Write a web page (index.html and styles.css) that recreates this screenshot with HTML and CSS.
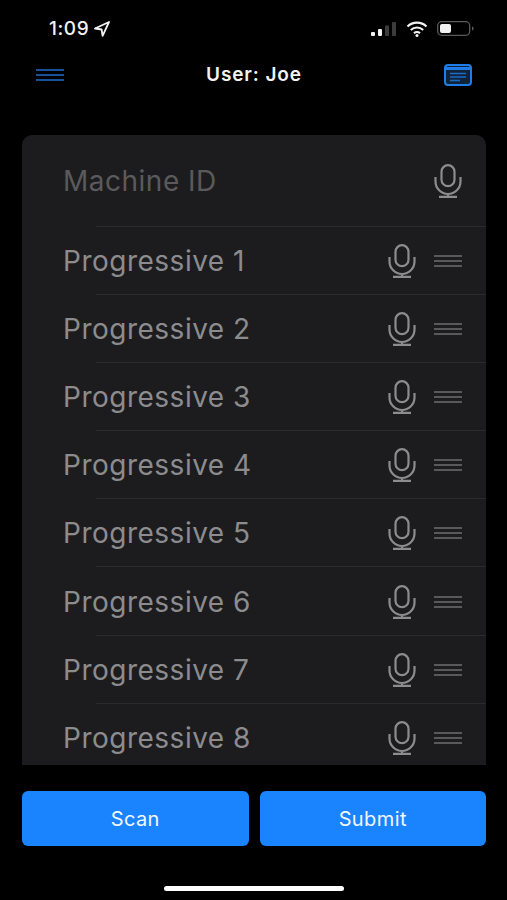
FILE: index.html
```html
<!DOCTYPE html>
<html lang="en">
<head>
    <meta charset="UTF-8">
    <meta name="viewport" content="width=device-width, initial-scale=1.0">
    <title>User: Joe</title>
    <link rel="stylesheet" href="styles.css">
</head>
<body>
    <svg class="sprites" width="0" height="0">
        <symbol id="mic" viewBox="0 0 28 34">
            <rect x="7.5" y="1.2" width="13" height="21" rx="6.5" fill="none" stroke="currentColor" stroke-width="2.2"/>
            <path d="M1.5 13v4.5a12.5 12.5 0 0 0 25 0V13M14 30v3M5 32.8h18" fill="none" stroke="currentColor" stroke-width="2.2"/>
        </symbol>
        <symbol id="handle" viewBox="0 0 28 12">
            <path d="M0 1h28M0 6h28M0 11h28" fill="none" stroke="currentColor" stroke-width="1.3"/>
        </symbol>
    </svg>

    <div class="status-bar">
        <div class="status-left">
            <span class="time">1:09</span>
            <svg class="location" viewBox="0 0 16 16"><path d="M15 1 1 7.5l6.6 1 1 6.4z" fill="none" stroke="currentColor" stroke-width="1.8" stroke-linejoin="round"/></svg>
        </div>
        <div class="status-right">
            <svg class="signal" viewBox="0 0 26 14">
                <rect x="0" y="10" width="4" height="4" rx="1" fill="#f2f2f2"/>
                <rect x="7" y="7" width="4" height="7" rx="1" fill="#f2f2f2"/>
                <rect x="14" y="3.5" width="4" height="10.5" rx="1" fill="#3c3c3c"/>
                <rect x="21" y="0" width="4" height="14" rx="1" fill="#3c3c3c"/>
            </svg>
            <svg class="wifi" viewBox="0 0 22 16">
                <path d="M1.5 5.5a13.5 13.5 0 0 1 19 0M4.8 9a9 9 0 0 1 12.4 0M8 12.2a4.4 4.4 0 0 1 6 0" fill="none" stroke="#f2f2f2" stroke-width="2.1"/>
                <circle cx="11" cy="14.4" r="1.5" fill="#f2f2f2"/>
            </svg>
            <svg class="battery" viewBox="0 0 37 15">
                <rect x="0.7" y="0.7" width="32" height="13.6" rx="4" fill="none" stroke="#5a5a5a" stroke-width="1.3"/>
                <rect x="3" y="3" width="11" height="9" rx="2" fill="#f2f2f2"/>
                <path d="M35 5.5c1 .4 1.6 1.1 1.6 2s-.6 1.6-1.6 2z" fill="#5a5a5a"/>
            </svg>
        </div>
    </div>

    <header class="nav">
        <svg class="menu-icon" viewBox="0 0 28 12"><path d="M0 1h28M0 6h28M0 11h28" fill="none" stroke="currentColor" stroke-width="1.6"/></svg>
        <div class="nav-title">User: Joe</div>
        <svg class="notes-icon" viewBox="0 0 28 22">
            <rect x="1" y="1" width="26" height="20" rx="3" fill="#10233c" stroke="currentColor" stroke-width="2"/>
            <path d="M1 4.5h26" stroke="currentColor" stroke-width="3"/>
            <path d="M6 9.5h16M6 13h16M6 16.5h10" stroke="currentColor" stroke-width="1.3" opacity="0.8"/>
        </svg>
    </header>

    <main class="card">
        <div class="row row-first">
            <span class="row-label placeholder">Machine ID</span>
            <svg class="mic"><use href="#mic"/></svg>
        </div>
        <div class="row"><span class="row-label">Progressive 1</span><svg class="mic"><use href="#mic"/></svg><svg class="handle"><use href="#handle"/></svg></div>
        <div class="row"><span class="row-label">Progressive 2</span><svg class="mic"><use href="#mic"/></svg><svg class="handle"><use href="#handle"/></svg></div>
        <div class="row"><span class="row-label">Progressive 3</span><svg class="mic"><use href="#mic"/></svg><svg class="handle"><use href="#handle"/></svg></div>
        <div class="row"><span class="row-label">Progressive 4</span><svg class="mic"><use href="#mic"/></svg><svg class="handle"><use href="#handle"/></svg></div>
        <div class="row"><span class="row-label">Progressive 5</span><svg class="mic"><use href="#mic"/></svg><svg class="handle"><use href="#handle"/></svg></div>
        <div class="row"><span class="row-label">Progressive 6</span><svg class="mic"><use href="#mic"/></svg><svg class="handle"><use href="#handle"/></svg></div>
        <div class="row"><span class="row-label">Progressive 7</span><svg class="mic"><use href="#mic"/></svg><svg class="handle"><use href="#handle"/></svg></div>
        <div class="row"><span class="row-label">Progressive 8</span><svg class="mic"><use href="#mic"/></svg><svg class="handle"><use href="#handle"/></svg></div>
    </main>

    <div class="actions">
        <button class="action-button">Scan</button>
        <button class="action-button">Submit</button>
    </div>

    <div class="home-bar"></div>
</body>
</html>
```

FILE: styles.css
```css
* {
    box-sizing: border-box;
}
html, body {
    margin: 0;
    height: 100%;
    overflow: hidden;
}
body {
    width: 507px;
    height: 900px;
    display: flex;
    flex-direction: column;
    background-color: #000;
    color: #f2f2f2;
    font-family: Inter, "Liberation Sans", sans-serif;
}
.sprites {
    position: absolute;
}
.status-bar {
    height: 57px;
    padding: 0 33px 0 49px;
    display: flex;
    justify-content: space-between;
    align-items: center;
}
.status-left {
    display: flex;
    align-items: center;
    gap: 5px;
}
.time {
    font-size: 19px;
    font-weight: 500;
    letter-spacing: 0.6px;
}
.location {
    width: 16px;
    height: 16px;
}
.status-right {
    display: flex;
    align-items: center;
    gap: 9px;
}
.signal {
    width: 26px;
    height: 14px;
}
.wifi {
    width: 22px;
    height: 16px;
}
.battery {
    width: 37px;
    height: 15px;
}
.nav {
    height: 36px;
    padding: 0 35px 0 36px;
    display: flex;
    justify-content: space-between;
    align-items: center;
}
.menu-icon {
    width: 28px;
    height: 12px;
    color: #1f6ccb;
}
.nav-title {
    margin-bottom: 2px;
    font-size: 19px;
    font-weight: 600;
    letter-spacing: 0.9px;
}
.notes-icon {
    width: 28px;
    height: 22px;
    color: #1f7de8;
}
.card {
    margin: 42px 21px 0 22px;
    height: 630px;
    flex-shrink: 0;
    overflow: hidden;
    background-color: #1c1c1e;
    border-radius: 10px 10px 0 0;
}
.row {
    position: relative;
    height: 68.1px;
    padding: 0 24px 0 41px;
    display: flex;
    align-items: center;
    gap: 18px;
    color: #8c8c8e;
}
.row::after {
    content: "";
    position: absolute;
    left: 74px;
    right: 0;
    bottom: 0;
    height: 1px;
    background-color: #2b2b2d;
}
.row-first {
    height: 92px;
}
.row-label {
    flex: 1;
    font-size: 28px;
    letter-spacing: 0.5px;
}
.placeholder {
    color: #5a5a5c;
}
.mic {
    width: 28px;
    height: 34px;
}
.handle {
    width: 28px;
    height: 12px;
    color: #6e6e70;
}
.actions {
    margin: 26px 21px 0 22px;
    display: flex;
    gap: 11px;
}
.action-button {
    flex: 1;
    height: 55px;
    border: none;
    border-radius: 6px;
    background-color: #1a84ff;
    color: #f2f7ff;
    font-family: inherit;
    font-size: 20px;
    letter-spacing: 0.4px;
}
.home-bar {
    width: 180px;
    height: 5px;
    margin: 40px auto 0;
    border-radius: 3px;
    background-color: #fff;
}
```
